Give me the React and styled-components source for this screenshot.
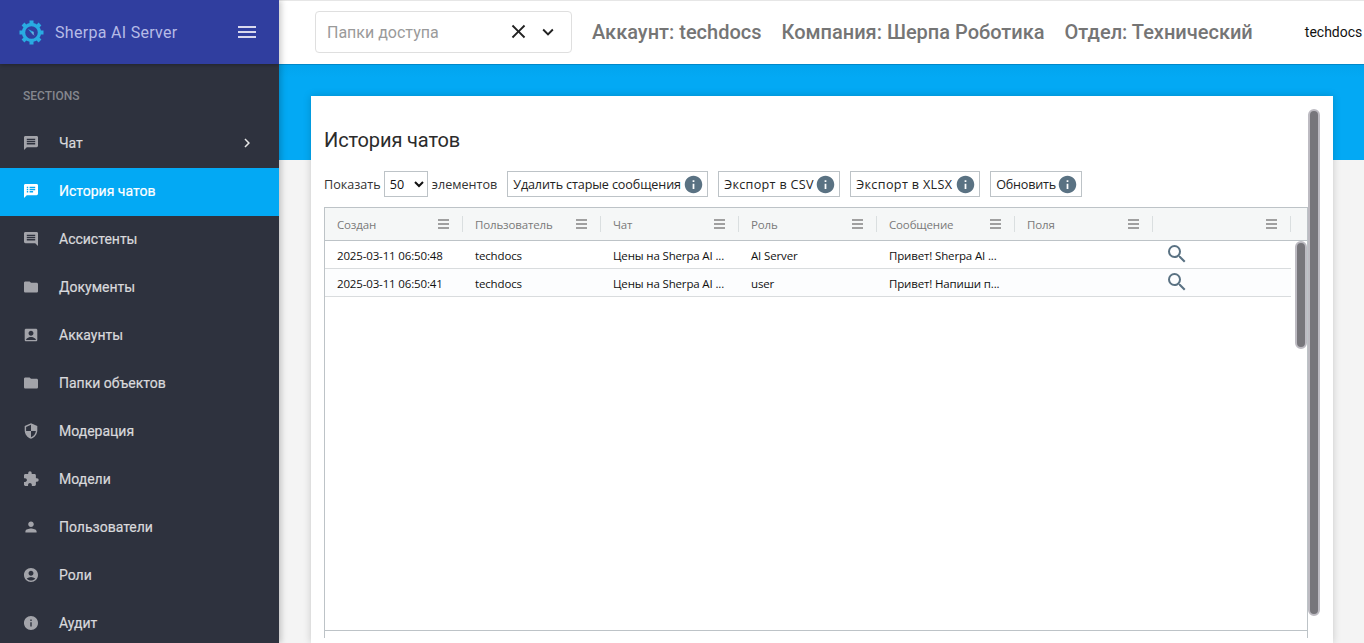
import React from 'react';
import styled, { createGlobalStyle } from 'styled-components';
import {
  MdMessage, MdSpeakerNotes, MdComment, MdFolder, MdAccountBox, MdSecurity, MdExtension,
  MdPerson, MdAccountCircle, MdInfo, MdChevronRight, MdMenu, MdClose, MdExpandMore, MdSearch,
} from 'react-icons/md';

const Global = createGlobalStyle`
  html, body { margin: 0; padding: 0; height: 100%; overflow: hidden; background: #f4f4f4; }
  * { box-sizing: border-box; }
  body { font-family: Roboto, "Liberation Sans", sans-serif; }
`;

const Shell = styled.div`
  display: flex;
  width: 1364px;
  height: 643px;
  overflow: hidden;
`;

const Sidebar = styled.aside`
  width: 279px;
  flex: none;
  background: #2e323e;
  display: flex;
  flex-direction: column;
  overflow: hidden;
  position: relative;
  z-index: 3;
  box-shadow: 2px 0 6px rgba(0, 0, 0, 0.22);
`;

const Brand = styled.div`
  height: 64px;
  flex: none;
  background: #303e9f;
  display: flex;
  align-items: center;
  padding: 0 20px 0 19px;
  box-shadow: 0 1px 4px rgba(0, 0, 0, 0.3);
`;

const BrandName = styled.span`
  margin-left: 11px;
  flex: 1;
  font-size: 16px;
  letter-spacing: 0.3px;
  color: #b6bbe6;
`;

const SectionLabel = styled.div`
  height: 56px;
  flex: none;
  padding: 25px 0 0 23px;
  font-size: 12px;
  line-height: 14px;
  font-weight: 500;
  color: #85878e;
`;

const NavItem = styled.div`
  height: 48px;
  flex: none;
  display: flex;
  align-items: center;
  padding: 0 23px 2px 24px;
  font-size: 14px;
  font-weight: 400;
  -webkit-text-stroke: 0.2px currentColor;
  color: ${(p) => (p.$active ? '#ffffff' : '#d9d9dc')};
  background: ${(p) => (p.$active ? '#03a9f4' : 'transparent')};
  & > svg:first-child {
    flex: none;
    width: 14px;
    height: 14px;
    margin-right: 21px;
    color: ${(p) => (p.$active ? '#ffffff' : '#a3a4aa')};
    transform: scale(1.2);
  }
`;

const NavText = styled.span`
  flex: 1;
`;

const Main = styled.main`
  flex: 1;
  min-width: 0;
  display: flex;
  flex-direction: column;
  background: #f4f4f4;
`;

const Header = styled.header`
  height: 65px;
  flex: none;
  background: #fff;
  border-top: 1px solid #e6e6e6;
  border-bottom: 1px solid #0288c9;
  display: flex;
  align-items: center;
  padding: 0 0 2px 36px;
  position: relative;
  z-index: 2;
  white-space: nowrap;
  overflow: hidden;
`;

const FolderSelect = styled.div`
  width: 257px;
  height: 42px;
  flex: none;
  border: 1px solid #dfdfdf;
  border-radius: 4px;
  display: flex;
  align-items: center;
  padding-left: 11px;
  color: #9a9a9a;
  font-size: 16px;
  margin-right: 20px;
`;

const SelectHint = styled.span`
  flex: 1;
  padding-top: 2px;
`;

const SelectIcon = styled.span`
  display: flex;
  color: #222;
  margin-right: ${(p) => p.$gap}px;
`;

const HeaderInfo = styled.span`
  font-size: 20px;
  font-weight: 500;
  color: #757575;
  margin-right: 20px;
`;

const UserName = styled.span`
  font-size: 14px;
  color: #111;
  margin-left: 32px;
`;

const Band = styled.div`
  height: 95px;
  flex: none;
  background: linear-gradient(#02a4ee, #03a9f4 12px);
`;

const Content = styled.div`
  flex: 1;
  min-height: 0;
  margin-top: -64px;
  padding: 0 31px 0 32px;
  position: relative;
`;

const Card = styled.section`
  position: relative;
  height: 100%;
  background: #fff;
  box-shadow: 0 0 8px rgba(0, 0, 0, 0.18);
  padding: 30px 0 0 13px;
`;

const Title = styled.h1`
  margin: 0;
  font-size: 20px;
  line-height: 28px;
  font-weight: 400;
  letter-spacing: -0.12px;
  color: #2b2b2b;
`;

const Toolbar = styled.div`
  display: flex;
  align-items: center;
  height: 26px;
  margin-top: 17px;
  font-family: "Open Sans", "Liberation Sans", sans-serif;
  font-size: 12.6px;
  color: #333;
`;

const PageSize = styled.select`
  width: 44px;
  height: 26px;
  margin: 0 4px 0 3px;
  padding: 0 0 0 1px;
  border: 1px solid #bdc3c7;
  border-radius: 0;
  background: #fff;
  font-family: "Open Sans", "Liberation Sans", sans-serif;
  font-size: 12.6px;
  color: #111;
`;

const ToolButton = styled.div`
  height: 26px;
  width: ${(p) => p.$width}px;
  flex: none;
  display: flex;
  align-items: center;
  justify-content: space-between;
  padding: 0 3px 0 5px;
  margin-left: 10px;
  border: 1px solid #bdc3c7;
  color: #222;
  letter-spacing: ${(p) => p.$spacing}px;
  white-space: nowrap;
  & svg { color: #5a7283; flex: none; }
`;

const Grid = styled.div`
  width: 984px;
  height: 431px;
  margin-top: 10px;
  border-left: 1px solid #bdc3c7;
  border-right: 1px solid #bdc3c7;
  border-top: 1px solid #bdc3c7;
  display: flex;
  flex-direction: column;
  font-family: "Open Sans", "Liberation Sans", sans-serif;
  font-size: 11.5px;
  letter-spacing: -0.15px;
`;

const GridHead = styled.div`
  height: 33px;
  flex: none;
  display: flex;
  background: #f5f7f7;
  border-bottom: 1px solid #bdc3c7;
`;

const HeadCell = styled.div`
  width: 138px;
  flex: none;
  display: flex;
  align-items: center;
  padding: 0 14px 0 12px;
  color: #7a7a7a;
  position: relative;
  &::after {
    content: '';
    position: absolute;
    right: 0;
    top: 8px;
    bottom: 8px;
    width: 1px;
    background: #dadfe0;
  }
`;

const HeadLabel = styled.span`
  flex: 1;
`;

const GridBody = styled.div`
  flex: 1;
  min-height: 0;
  border-bottom: 1px solid #bdc3c7;
  margin-bottom: 7px;
`;

const Row = styled.div`
  display: flex;
  width: 966px;
  height: 28px;
  background: ${(p) => (p.$odd ? '#fcfdfe' : '#fff')};
  border-bottom: 1px solid #d9dcde;
`;

const Cell = styled.div`
  width: 138px;
  flex: none;
  padding: 0 12px;
  line-height: 29px;
  color: #111;
  white-space: nowrap;
`;

const LensCell = styled.div`
  width: 138px;
  flex: none;
  padding-left: 12px;
  color: #5a7283;
  line-height: 0;
  margin-top: 1px;
`;

const Scrollbar = styled.div`
  position: absolute;
  left: ${(p) => p.$left}px;
  top: ${(p) => p.$top}px;
  height: ${(p) => p.$height}px;
  width: 12px;
  border-radius: 6px;
  background: #77767b;
  border: 2px solid #bdbbc2;
`;

const columns = ['Создан', 'Пользователь', 'Чат', 'Роль', 'Сообщение', 'Поля', ''];
const rows = [
  ['2025-03-11 06:50:48', 'techdocs', 'Цены на Sherpa AI ...', 'AI Server', 'Привет! Sherpa AI ...'],
  ['2025-03-11 06:50:41', 'techdocs', 'Цены на Sherpa AI ...', 'user', 'Привет! Напиши п...'],
];
const nav = [
  [MdMessage, 'Чат'],
  [MdSpeakerNotes, 'История чатов'],
  [MdComment, 'Ассистенты'],
  [MdFolder, 'Документы'],
  [MdAccountBox, 'Аккаунты'],
  [MdFolder, 'Папки объектов'],
  [MdSecurity, 'Модерация'],
  [MdExtension, 'Модели'],
  [MdPerson, 'Пользователи'],
  [MdAccountCircle, 'Роли'],
  [MdInfo, 'Аудит'],
];
const actions = [
  ['Удалить старые сообщения', 201, -0.12],
  ['Экспорт в CSV', 122, 0.3],
  ['Экспорт в XLSX', 130, 0.35],
  ['Обновить', 92, -0.2],
];

const GearLogo = () => (
  <svg width="25" height="25" viewBox="0 0 25 25" fill="none">
    <circle cx="12.5" cy="12.5" r="8" stroke="#29abe2" strokeWidth="3.4" />
    {[0, 45, 90, 135, 180, 225, 270, 315].map((a) => (
      <rect key={a} x="10.5" y="0.5" width="4" height="4" fill="#29abe2" transform={`rotate(${a} 12.5 12.5)`} />
    ))}
    <path d="M9 9l6 3-1 3z" fill="#29abe2" />
    <path d="M15.5 16l-3-3.5 1.5-1z" fill="#7fa9d8" />
  </svg>
);

const ColumnMenuIcon = () => (
  <svg width="11" height="10" viewBox="0 0 11 10" fill="#a0a0a0">
    <rect y="0" width="11" height="2" />
    <rect y="4" width="11" height="2" />
    <rect y="8" width="11" height="2" />
  </svg>
);

export default function App() {
  return (
    <>
      <Global />
      <Shell>
        <Sidebar>
          <Brand>
            <GearLogo />
            <BrandName>Sherpa AI Server</BrandName>
            <MdMenu size={24} color="#d8d8ee" />
          </Brand>
          <SectionLabel>SECTIONS</SectionLabel>
          {nav.map(([Icon, label], i) => (
            <NavItem key={label} $active={i === 1}>
              <Icon />
              <NavText>{label}</NavText>
              {i === 0 && <MdChevronRight size={18} color="#e6e6e6" />}
            </NavItem>
          ))}
        </Sidebar>
        <Main>
          <Header>
            <FolderSelect>
              <SelectHint>Папки доступа</SelectHint>
              <SelectIcon $gap={7}><MdClose size={23} /></SelectIcon>
              <SelectIcon $gap={12}><MdExpandMore size={22} /></SelectIcon>
            </FolderSelect>
            <HeaderInfo>Аккаунт: techdocs</HeaderInfo>
            <HeaderInfo>Компания: Шерпа Роботика</HeaderInfo>
            <HeaderInfo>Отдел: Технический</HeaderInfo>
            <UserName>techdocs</UserName>
          </Header>
          <Band />
          <Content>
            <Card>
              <Title>История чатов</Title>
              <Toolbar>
                <span>Показать</span>
                <PageSize defaultValue="50"><option>50</option></PageSize>
                <span>элементов</span>
                {actions.map(([label, width, spacing]) => (
                  <ToolButton key={label} $width={width} $spacing={spacing}>
                    {label}
                    <MdInfo size={21} />
                  </ToolButton>
                ))}
              </Toolbar>
              <Grid>
                <GridHead>
                  {columns.map((c) => (
                    <HeadCell key={c || 'actions'}>
                      <HeadLabel>{c}</HeadLabel>
                      <ColumnMenuIcon />
                    </HeadCell>
                  ))}
                </GridHead>
                <GridBody>
                  {rows.map((r, i) => (
                    <Row key={r[0]} $odd={i === 1}>
                      {r.map((v, j) => <Cell key={j}>{v}</Cell>)}
                      <Cell />
                      <LensCell><MdSearch size={24} /></LensCell>
                    </Row>
                  ))}
                </GridBody>
              </Grid>
              <Scrollbar $left={997} $top={13} $height={507} />
              <Scrollbar $left={984} $top={145} $height={108} />
            </Card>
          </Content>
        </Main>
      </Shell>
    </>
  );
}
